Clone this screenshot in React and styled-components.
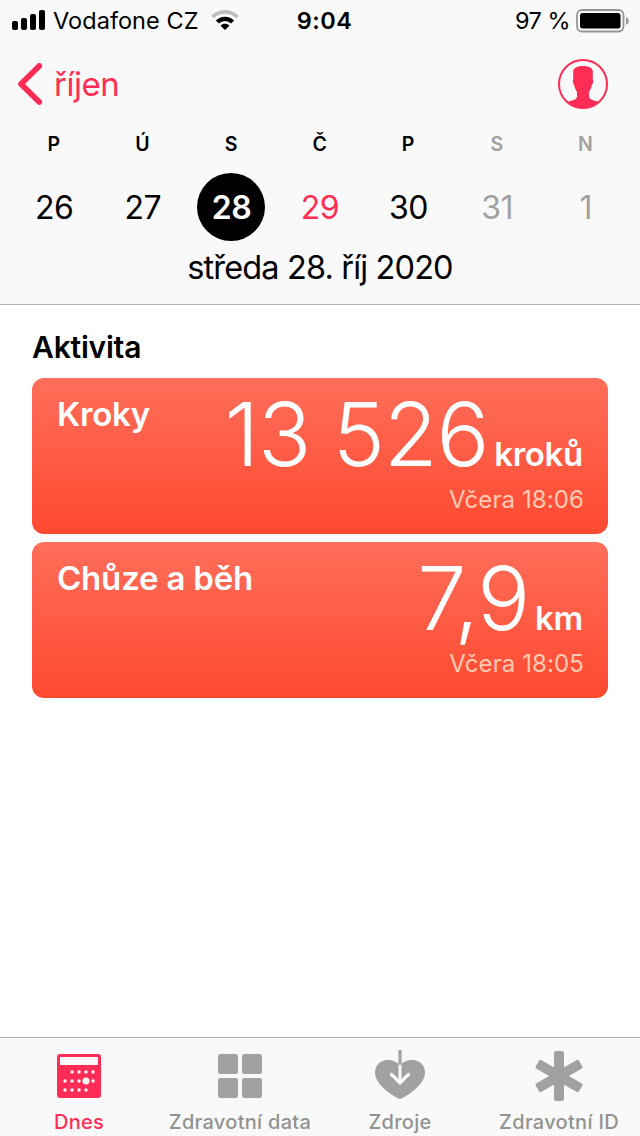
import styled, { createGlobalStyle } from 'styled-components';
const pink = '#ff2d55';
const gray = '#a1a1a1';
const GlobalStyle = createGlobalStyle`
   body {
      background-color: #ffffff;
      margin: 0;
   }
   * {
      box-sizing: border-box;
   }
`;
const StyledScreen = styled.div`
   color: #000000;
   display: flex;
   flex-direction: column;
   font-family: Inter, 'Liberation Sans', sans-serif;
   height: 1136px;
   overflow: hidden;
   white-space: nowrap;
   width: 640px;
`;
const StyledHeader = styled.header`
   background-color: #f9f9f9;
   border-bottom: 1px solid #b2b2b2;
   height: 305px;
`;
const StyledStatusBar = styled.div`
   display: grid;
   font-size: 23.5px;
   grid-template-columns: 1fr auto 1fr;
   height: 40px;
   line-height: 41px;
   padding: 0 11px 0 12px;
`;
const StyledStatusGroup = styled.div`
   align-items: center;
   display: flex;
   justify-content: ${({ $end }) => ($end ? 'flex-end' : 'flex-start')};
   & svg {
      flex: none;
      margin-bottom: ${({ $end }) => ($end ? '0' : '1px')};
      margin-top: ${({ $end }) => ($end ? '1px' : '0')};
   }
`;
const StyledCarrier = styled.span`
   letter-spacing: 0.05px;
   margin: 0 12px 0 7px;
`;
const StyledClock = styled.span`
   font-weight: 600;
   letter-spacing: 0.5px;
   margin-left: 8px;
`;
const StyledPercent = styled.span`
   letter-spacing: -0.5px;
   margin-right: 6px;
`;
const StyledNav = styled.nav`
   align-items: center;
   display: flex;
   height: 88px;
   justify-content: space-between;
   padding: 0 32px 0 17px;
`;
const StyledBack = styled.a`
   align-items: center;
   color: ${pink};
   display: flex;
   font-size: 33px;
   gap: 10px;
   letter-spacing: -0.45px;
   line-height: 40px;
`;
const StyledWeek = styled.div`
   display: grid;
   grid-template-columns: repeat(7, 1fr);
   justify-items: center;
   padding: 0 10px;
`;
const StyledWeekday = styled.span`
   color: ${({ $muted }) => ($muted ? gray : '#000000')};
   font-size: 19.5px;
   font-weight: 600;
   height: 45px;
   letter-spacing: 0.8px;
   line-height: 32px;
`;
const dayColors = { today: pink, muted: gray, selected: '#ffffff' };
const StyledDay = styled.span`
   background-color: ${({ $kind }) =>
      $kind === 'selected' ? '#000000' : 'transparent'};
   border-radius: 50%;
   color: ${({ $kind }) => dayColors[$kind] || '#000000'};
   font-size: 32px;
   font-weight: ${({ $kind }) => ($kind === 'selected' ? 600 : 400)};
   height: 68px;
   letter-spacing: -0.5px;
   line-height: 70px;
   text-align: center;
   width: 68px;
`;
const StyledDate = styled.div`
   font-size: 32.5px;
   letter-spacing: -0.85px;
   line-height: 53px;
   text-align: center;
`;
const StyledMain = styled.main`
   display: flex;
   flex: 1;
   flex-direction: column;
   gap: 8px;
   padding: 11px 32px 0;
`;
const StyledHeading = styled.h2`
   font-size: 30px;
   font-weight: 600;
   letter-spacing: -0.2px;
   line-height: 62px;
   margin: 0 0 -8px;
`;
const StyledCard = styled.section`
   background: linear-gradient(#ff6e5a, #ff4930);
   border-radius: 12px;
   color: #ffffff;
   display: flex;
   height: 156px;
   justify-content: space-between;
   padding: 8px 25px 0;
`;
const StyledTitle = styled.h3`
   font-size: 33px;
   font-weight: 600;
   letter-spacing: -0.2px;
   line-height: 56px;
   margin: 0;
`;
const StyledReading = styled.div`
   display: flex;
   flex-direction: column;
   text-align: right;
`;
const StyledValue = styled.div`
   align-items: baseline;
   display: flex;
   font-size: 88px;
   font-weight: 320;
   height: 96px;
   justify-content: flex-end;
   letter-spacing: -1.2px;
   line-height: 96px;
   word-spacing: -1px;
`;
const StyledUnit = styled.span`
   font-size: 33px;
   font-weight: 600;
   letter-spacing: -0.3px;
   line-height: 40px;
   margin-left: 6px;
`;
const StyledStamp = styled.span`
   color: #ffcbb3;
   font-size: 24px;
   letter-spacing: 0.1px;
   line-height: 36px;
   margin-right: -1px;
`;
const StyledTabs = styled.footer`
   background-color: #f9f9f9;
   border-top: 1px solid #b2b2b2;
   display: grid;
   grid-template-columns: 158px 164px 156px 162px;
   height: 99px;
`;
const StyledTab = styled.a`
   align-items: center;
   color: ${({ $active }) => ($active ? pink : '#929292')};
   display: flex;
   flex-direction: column;
   font-size: 20px;
   font-weight: 500;
   letter-spacing: 0.3px;
   line-height: 20px;
   padding-top: 12px;
   & svg {
      margin-bottom: 10px;
   }
`;
const SignalIcon = () => (
   <svg width='34' height='20' viewBox='0 0 34 20'>
      <rect x='0' y='11' width='6' height='9' rx='2' />
      <rect x='9' y='8' width='6' height='12' rx='2' />
      <rect x='18' y='4' width='6' height='16' rx='2' />
      <rect x='27' y='0' width='6' height='20' rx='2' />
   </svg>
);
const WifiIcon = () => (
   <svg width='28' height='20' viewBox='0 0 28 20'>
      <path
         d='M1.5 7C8.5 .2 19.500 .2 26.500 7'
         fill='none'
         stroke='#bdbdbd'
         strokeWidth='3.8'
      />
      <path
         d='M6.4 12C10.5 7.700 17.500 7.700 21.600 12'
         fill='none'
         stroke='#000000'
         strokeWidth='4.2'
      />
      <path d='M14 20L9.6 15.7C12 13.2 16 13.2 18.4 15.7Z' />
   </svg>
);
const BatteryIcon = () => (
   <svg width='53' height='24' viewBox='0 0 53 24'>
      <rect
         x='1'
         y='1'
         width='46.5'
         height='21.5'
         rx='5'
         fill='none'
         stroke='#969696'
         strokeWidth='1.8'
      />
      <rect x='4' y='4' width='40.5' height='15.5' rx='2.5' />
      <path d='M50 8C53.6 9.5 53.6 14.5 50 16Z' fill='#969696' />
   </svg>
);
const ChevronIcon = () => (
   <svg width='27' height='42' viewBox='0 0 27 42'>
      <path
         d='M22.2 3L4 21L22.2 39'
         fill='none'
         stroke={pink}
         strokeLinecap='round'
         strokeLinejoin='round'
         strokeWidth='5.8'
      />
   </svg>
);
const AvatarIcon = () => (
   <svg width='50' height='50' viewBox='0 0 50 50'>
      <circle
         cx='25'
         cy='25'
         r='24'
         fill='none'
         stroke={pink}
         strokeWidth='2'
      />
      <path
         d='M15.2 12C15.8 8.5 19.5 7 25 7S34.2 8.5 34.8 12V20.5C35.4 21.5 35.2 24.5 34 25.500C33.400 28.500 32.500 30.500 31 33V37.500C31.400 39.500 32.500 40.500 34.500 41L41.500 43.200A24.500 24.500 0 0 1 8.500 43.200L15.500 41C17.500 40.500 18.600 39.500 19 37.500V33C17.500 30.500 16.600 28.500 16 25.500C14.800 24.500 14.600 21.500 15.200 20.500Z'
         fill={pink}
      />
   </svg>
);
const calendarDots = [
   [15, 18], [22, 18], [29, 18], [36, 18],
   [8, 27], [15, 27], [22, 27], [36, 27],
   [8, 36], [15, 36], [22, 36], [29, 36],
];
const CalendarIcon = () => (
   <svg width='50' height='52' viewBox='-3 -4 50 52'>
      <rect width='44' height='44' rx='3' fill={pink} />
      <rect x='3' y='3' width='38' height='8' fill='#f9f9f9' />
      {calendarDots.map(([x, y]) => (
         <circle key={`${x}-${y}`} cx={x} cy={y} r='1.7' fill='#f9f9f9' />
      ))}
      <circle cx='29' cy='27' r='3.5' fill='#f9f9f9' />
   </svg>
);
const GridIcon = () => (
   <svg width='50' height='52' viewBox='-3 -4 50 52' fill={gray}>
      <rect width='20' height='20' rx='2.5' />
      <rect x='24' width='20' height='20' rx='2.5' />
      <rect y='24' width='20' height='20' rx='2.5' />
      <rect x='24' y='24' width='20' height='20' rx='2.5' />
   </svg>
);
const HeartIcon = () => (
   <svg width='50' height='52' viewBox='0 0 50 52' fill='none'>
      <path
         d='M25 49C22 48.500 0 36 0 22.500C0 15 5.500 10 12.500 10C18 10 22.500 12 25 15.500C27.500 12 32 10 37.500 10C44.500 10 50 15 50 22.500C50 36 28 48.500 25 49Z'
         fill={gray}
      />
      <path d='M25 13V32' stroke='#f9f9f9' strokeWidth='3' />
      <path
         d='M16.5 24.5L25 32.700L33.5 24.5'
         stroke='#f9f9f9'
         strokeLinecap='round'
         strokeWidth='3.2'
      />
      <path
         d='M25 .5V13.500'
         stroke={gray}
         strokeLinecap='round'
         strokeWidth='3.2'
      />
   </svg>
);
const AsteriskIcon = () => (
   <svg width='50' height='52' viewBox='0 0 50 52' fill={gray}>
      {[0, 60, 120].map(angle => (
         <rect
            key={angle}
            x='20'
            y='1'
            width='10'
            height='50'
            rx='2'
            transform={`rotate(${angle} 25 26)`}
         />
      ))}
   </svg>
);
const week = [
   { name: 'P', day: 26 },
   { name: 'Ú', day: 27 },
   { name: 'S', day: 28, kind: 'selected' },
   { name: 'Č', day: 29, kind: 'today' },
   { name: 'P', day: 30 },
   { name: 'S', day: 31, kind: 'muted' },
   { name: 'N', day: 1, kind: 'muted' },
];
const cards = [
   { title: 'Kroky', value: '13 526', unit: 'kroků', stamp: 'Včera 18:06' },
   { title: 'Chůze a běh', value: '7,9', unit: 'km', stamp: 'Včera 18:05' },
];
const tabs = [
   { label: 'Dnes', Icon: CalendarIcon, active: true },
   { label: 'Zdravotní data', Icon: GridIcon },
   { label: 'Zdroje', Icon: HeartIcon },
   { label: 'Zdravotní ID', Icon: AsteriskIcon },
];
const App = () => (
   <StyledScreen>
      <GlobalStyle />
      <StyledHeader>
         <StyledStatusBar>
            <StyledStatusGroup>
               <SignalIcon />
               <StyledCarrier>Vodafone CZ</StyledCarrier>
               <WifiIcon />
            </StyledStatusGroup>
            <StyledClock>9:04</StyledClock>
            <StyledStatusGroup $end>
               <StyledPercent>97 %</StyledPercent>
               <BatteryIcon />
            </StyledStatusGroup>
         </StyledStatusBar>
         <StyledNav>
            <StyledBack>
               <ChevronIcon />
               říjen
            </StyledBack>
            <AvatarIcon />
         </StyledNav>
         <StyledWeek>
            {week.map(({ name, day, kind }) => (
               <StyledWeekday key={name + day} $muted={kind === 'muted'}>
                  {name}
               </StyledWeekday>
            ))}
            {week.map(({ day, kind }) => (
               <StyledDay key={day} $kind={kind}>
                  {day}
               </StyledDay>
            ))}
         </StyledWeek>
         <StyledDate>středa 28. říj 2020</StyledDate>
      </StyledHeader>
      <StyledMain>
         <StyledHeading>Aktivita</StyledHeading>
         {cards.map(({ title, value, unit, stamp }) => (
            <StyledCard key={title}>
               <StyledTitle>{title}</StyledTitle>
               <StyledReading>
                  <StyledValue>
                     {value}
                     <StyledUnit>{unit}</StyledUnit>
                  </StyledValue>
                  <StyledStamp>{stamp}</StyledStamp>
               </StyledReading>
            </StyledCard>
         ))}
      </StyledMain>
      <StyledTabs>
         {tabs.map(({ label, Icon, active }) => (
            <StyledTab key={label} $active={active}>
               <Icon />
               {label}
            </StyledTab>
         ))}
      </StyledTabs>
   </StyledScreen>
);
export default App;
